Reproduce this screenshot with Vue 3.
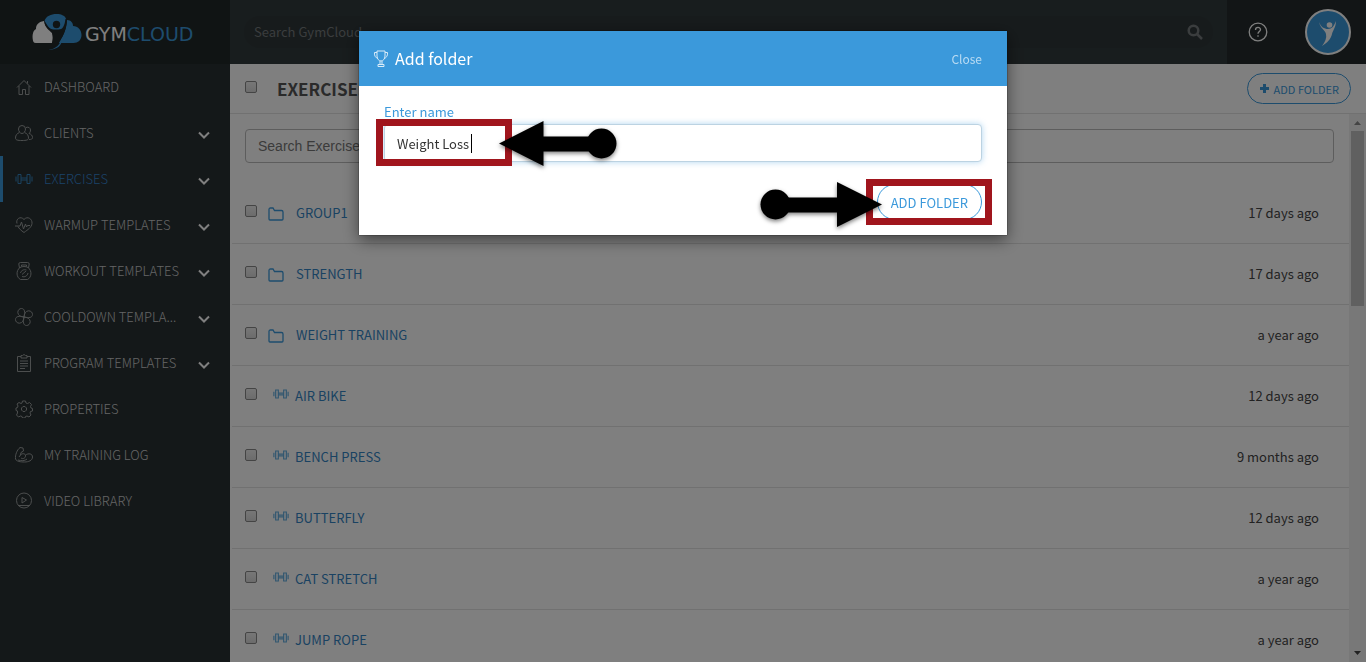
<script setup>
import { ref } from 'vue'

const search = ref('')
const filter = ref('')
const folderName = ref('Weight Loss')

const dumbbell = 'M1 6.5v5M3 4.5h3v9H3zM6 8h6M6 10h6M12 4.5h3v9h-3zM17 6.5v5'

const nav = [
  { label: 'Dashboard', icon: 'M2 9.5 9 2.5l7 7M4 8v8.5h3.5v-5h3v5H14V8M12.5 3v2.5' },
  { label: 'Clients', more: true, icon: 'M7 1.5a3.5 3.5 0 0 1 3.5 3.5c0 2-1.5 4.5-3.5 4.5S3.5 7 3.5 5A3.5 3.5 0 0 1 7 1.5zM4.5 8.5C2 9.5.5 11 .5 14c0 2 2 2.5 6.5 2.5s6.5-.5 6.5-2.5c0-3-1.5-4.5-4-5.5M11 3.5c2.5-1 4.5.5 4.5 2.5 0 1.5-.5 2.5-1.5 3.5 2 .5 3.500 2 3.500 4 0 1.500-1 2-3.500 2' },
  { label: 'Exercises', more: true, active: true, icon: dumbbell },
  { label: 'Warmup Templates', more: true, icon: 'M2 7.5C.5 3 5.5-.5 9 3.5c3.5-4 8.5-.5 8 4-.5 4-4 6-8 9-3-2-5-4-6-6M0 10h5l1.5-4 2 7L10.5 8l1 3 1-1.5H15' },
  { label: 'Workout Templates', more: true, icon: 'M4.5 6 3.8 2Q3.8.5 5.5.5h7q1.7 0 1.7 1.5L13.5 6M6.5 4.5V3h5v1.5M5 5.500C.5 9 1.5 15.500 5.500 17.500h7c4-2 5-8.500.5-12-2-1.300-6-1.300-8 0zM5.500 11c.5-2.500 3.500-4 6-3M13 11c-.5 3-3.500 4.500-6 3.500M7 12.500l4-3.500' },
  { label: 'Cooldown Templa...', more: true, icon: 'M9 9C6 9 3 7.500 2.800 4.500 2.800 2 4.500.5 6.500.5 9.500.5 10.500 4 9 9zM9 9C9 6 10.500 3 13.500 2.800 16 2.800 17.500 4.500 17.500 6.500 17.500 9.500 14 10.500 9 9zM9 9C12 9 15 10.500 15.200 13.500 15.200 16 13.500 17.500 11.500 17.500 8.500 17.500 7.500 14 9 9zM9 9C9 12 7.500 15 4.500 15.200 2 15.200.5 13.500.5 11.500.5 8.500 4 7.500 9 9z' },
  { label: 'Program Templates', more: true, icon: 'M6 2.5H2.5v15h13v-15H12M6 1.5h1.5Q9-.5 10.5 1.5H12v2.5H6zM5 7h8M5 9.5h8M5 12h8M5 14.5h5' },
  { label: 'Properties', icon: 'M7.5 1h3l.5 2 1.5.5 2-1 2 2-1 2 .5 1.5 1.5.5v2.5l-2 .5-.5 1.5 1 2-2 2-2-1-1.5.5-.5 1.5h-2.5l-.5-1.5-1.5-.5-2 1-2-2 1-2L2.5 11 1 10.5V8l1.5-.5L3 6 2 4l2-1.5 2 1 1-.5zM6.5 8 8 6.5h2L11.5 8v2L10 11.5H8L6.5 10z' },
  { label: 'My Training Log', icon: 'M5 1.5 8 2l.5 3L6 6.5 5.5 9c2-2 4-1.5 5 0 3-2 7-1.5 7 2s-4 5-8 5c-4 0-8-.5-9-3C0 9 2 4 5 1.5zM5.5 9 4 11M6 12c2 1.5 5 0 4.5-3M3 14c3 1 7 1 9-1' },
  { label: 'Video Library', icon: 'M9 1a7.5 7.5 0 1 1 0 15A7.5 7.5 0 0 1 9 1zM7 5.5v5.5L11.5 8zM3 13.5h12' },
]

const rows = [
  { name: 'Group1', folder: true, when: '17 days ago' },
  { name: 'Strength', folder: true, when: '17 days ago' },
  { name: 'Weight Training', folder: true, when: 'a year ago' },
  { name: 'Air Bike', when: '12 days ago' },
  { name: 'Bench Press', when: '9 months ago' },
  { name: 'Butterfly', when: '12 days ago' },
  { name: 'Cat Stretch', when: 'a year ago' },
  { name: 'Jump Rope', when: 'a year ago' },
]
</script>

<template>
  <div class="app">
    <aside class="sidebar">
      <a class="logo" href="#">
        <svg class="cloud" width="51" height="38" viewBox="0 0 51 38" aria-hidden="true">
          <path fill="#fff" d="M12 8C6 9 4 12 4 16 0 18 0 25 1.5 29q.5 1 2.5 1h16c1-3 1-7 0-10-3-3-7-5-8-12z" />
          <path fill="#3b99db" d="M12.5 8C14 3 19 1 24.5 1c5 0 9 2 9.5 5-1 8-3 11-7 14h-4c-4-3-7-6-10.5-12z" />
          <path fill="#3b99db" d="M35 7c4 0 6 3 6 6 5 0 8.500 4 8.500 9s-3.500 8-8 8H26c5-6 8-12 9-23z" />
          <path fill="#212829" d="M12.5 8c2 5 5 8 9 8.500h5c4 0 6-3 7-10.500h1.500c0 9-3 15-8 24h-7c1.500-5 1-10-1.500-13-4-2-6-5-6-9z" />
          <circle cx="24.5" cy="11.500" r="3.700" fill="#212829" />
          <path fill="#3b99db" d="M16 37c8-1 12-5 14-12 1 7-5 12-14 12z" />
        </svg>
        <span class="word">GYM<b>CLOUD</b></span>
      </a>
      <nav>
        <a v-for="n in nav" :key="n.label" href="#" class="nav-item" :class="{ active: n.active }">
          <svg class="nav-icon" width="18" height="18" viewBox="0 0 18 18" aria-hidden="true"><path :d="n.icon" /></svg>
          <span class="nav-label">{{ n.label }}</span>
          <svg v-if="n.more" class="chevron" width="12" height="8" viewBox="0 0 12 8" aria-hidden="true"><path d="M1 1.5 6 6.5l5-5" /></svg>
        </a>
      </nav>
    </aside>

    <div class="main">
      <header class="topbar">
        <form class="search" @submit.prevent>
          <input v-model="search" type="text" placeholder="Search GymCloud" aria-label="Search GymCloud" />
          <button type="submit" aria-label="Search">
            <svg width="16" height="16" viewBox="0 0 16 16"><circle cx="6.5" cy="6.5" r="4.8" /><path d="m10 10 5 5" /></svg>
          </button>
        </form>
        <div class="account">
          <a href="#" class="help" aria-label="Help">
            <svg width="20" height="20" viewBox="0 0 20 20"><circle cx="10" cy="10" r="8.8" /><path d="M7.5 8c0-3.5 5-3.3 5-.5 0 2-2.5 2-2.5 4.3M10 13.3v1.5" /></svg>
          </a>
          <a href="#" class="avatar" aria-label="Profile">
            <svg width="42" height="42" viewBox="0 0 42 42"><circle cx="22.5" cy="14" r="2.8" /><path d="M12 11c2 5 5 7 9 7 4 0 6-3 8-8 0 6-3 9-4 13-1 5-5 9-10 12 3-4 5-8 4-12-1-4-6-6-7-12z" /></svg>
          </a>
        </div>
      </header>

      <div class="heading">
        <input type="checkbox" aria-label="Select all" />
        <h1>Exercises</h1>
        <button type="button" class="pill small">
          <svg width="11" height="11" viewBox="0 0 11 11" aria-hidden="true"><path d="M5.5 1v9M1 5.5h9" /></svg>
          Add folder
        </button>
      </div>

      <div class="scroller">
        <section class="content">
          <input v-model="filter" class="filter" type="text" placeholder="Search Exercises" aria-label="Search Exercises" />
          <ul>
            <li v-for="r in rows" :key="r.name">
              <input type="checkbox" :aria-label="'Select ' + r.name" />
              <svg v-if="r.folder" class="folder" width="16" height="14" viewBox="0 0 16 14" aria-hidden="true"><path d="M1 12V2.5Q1 1 2.5 1H5l1.5 2.5h7Q15 3.5 15 5v7q0 1-1 1H2q-1 0-1-1z" /></svg>
              <svg v-else class="bell" width="16" height="16" viewBox="0 0 18 18" aria-hidden="true"><path :d="dumbbell" /></svg>
              <a href="#">{{ r.name }}</a>
              <time>{{ r.when }}</time>
            </li>
          </ul>
        </section>
        <div class="bar" aria-hidden="true">
          <svg width="7" height="4" viewBox="0 0 7 4"><path d="M0 4 3.5 0 7 4z" /></svg>
          <div class="track"><div class="thumb"></div></div>
          <svg class="down" width="7" height="4" viewBox="0 0 7 4"><path d="M0 0h7L3.5 4z" /></svg>
        </div>
      </div>
    </div>
  </div>

  <div class="backdrop">
    <form class="modal" role="dialog" aria-label="Add folder" @submit.prevent>
      <header>
        <svg width="16" height="18" viewBox="0 0 16 18" aria-hidden="true"><path d="M4 1h8v5c0 3-2 5-4 5S4 9 4 6zM4 2.5H1.5C1 6 3 8 5 8.5M12 2.5h2.5C15 6 13 8 11 8.5M7 11v3.5M9 11v3.5M5 14.5h6v2H5z" /></svg>
        <h2>Add folder</h2>
        <button type="button" class="close">Close</button>
      </header>
      <div class="body">
        <label for="folder-name">Enter name</label>
        <div class="field">
          <input id="folder-name" v-model="folderName" type="text" />
          <i class="caret"></i>
        </div>
        <button type="submit" class="pill">Add folder</button>
      </div>
      <svg class="callouts" width="648" height="204" viewBox="0 0 648 204" aria-hidden="true">
        <g class="frame">
          <rect x="20.5" y="91.5" width="129" height="40" />
          <rect x="510.5" y="151.5" width="119" height="39" />
        </g>
        <g class="arrow">
          <path d="M140 112.5 184.5 90v15.500H231v15h-46.500V135z" />
          <circle cx="242.5" cy="112.5" r="15" />
        </g>
        <g class="arrow">
          <path d="M523 173.5 478 151v15.500h-49v15h49V196z" />
          <circle cx="416.5" cy="173.5" r="15" />
        </g>
      </svg>
    </form>
  </div>
</template>

<style>
body {
  margin: 0;
  background: #fff;
}
</style>

<style scoped>
* {
  box-sizing: border-box;
}
.app,
.backdrop {
  font: 13px/20px "Noto Sans CJK KR", "Open Sans", sans-serif;
}
.app {
  display: flex;
  height: 100vh;
  overflow: hidden;
}
a {
  text-decoration: none;
}
input,
button {
  font: inherit;
}
svg {
  flex: none;
  fill: none;
}

.sidebar {
  flex: none;
  width: 230px;
  background: #293032;
}
.logo {
  display: flex;
  align-items: center;
  gap: 2px;
  height: 64px;
  padding-left: 32px;
  background: #212829;
}
.word {
  padding-top: 4px;
  color: #fff;
  font: 19px/20px "DejaVu Sans", sans-serif;
}
.word b {
  color: #3b99db;
  font-weight: 400;
}
.nav-item {
  display: flex;
  align-items: center;
  height: 46px;
  padding: 0 20px 0 12px;
  border-left: 3px solid transparent;
  color: #c8caca;
  font-weight: 300;
  text-transform: uppercase;
}
.nav-icon {
  margin-right: 11px;
  stroke: #989d9d;
}
.nav-label {
  flex: 1;
  white-space: nowrap;
}
.chevron {
  margin-top: 3px;
  stroke: #fff;
  stroke-width: 2;
}
.active {
  border-color: #3b99db;
  color: #3585d0;
}
.active .nav-icon {
  stroke: #3585c0;
}

.main {
  display: flex;
  flex: 1;
  flex-direction: column;
  min-width: 0;
}
.topbar {
  display: flex;
  flex: none;
  height: 64px;
  background: #313a3c;
}
.search {
  display: flex;
  flex: 1;
  align-items: center;
  margin: 16px 14px;
  padding: 0 10px;
  border-radius: 16px;
  background: #2f3739;
}
.search input {
  flex: 1;
  border: 0;
  outline: 0;
  padding: 0;
  background: none;
  color: #ccc;
}
.search input::placeholder {
  color: #757a7c;
  opacity: 1;
}
.search button {
  display: flex;
  border: 0;
  padding: 0;
  background: none;
}
.search svg {
  stroke: #757a7c;
  stroke-width: 2.5;
}
.account {
  display: flex;
  align-items: center;
  justify-content: space-between;
  width: 139px;
  padding: 0 15px 0 21px;
  background: #242b2c;
}
.help,
.avatar {
  display: flex;
}
.help svg {
  stroke: #fff;
  stroke-width: 1.3;
}
.avatar {
  border: 2px solid #fff;
  border-radius: 50%;
  background: #3b99db;
}
.avatar svg {
  fill: #fff;
}

.heading {
  display: flex;
  flex: none;
  align-items: center;
  height: 50px;
  padding: 0 15px;
  border-bottom: 1px solid #e2e2e2;
}
h1 {
  flex: 1;
  margin: 0 0 0 20px;
  color: #555;
  font-size: 17px;
  font-weight: 700;
  text-transform: uppercase;
}
input[type="checkbox"] {
  flex: none;
  appearance: none;
  width: 12px;
  height: 12px;
  margin: 0 0 4px;
  border: 1px solid #888;
  border-radius: 2px;
  background: linear-gradient(#eee, #d8d8d8);
}
.pill {
  display: flex;
  align-items: center;
  justify-content: center;
  height: 36px;
  padding: 2px 13px 0;
  border: 1px solid #3b99db;
  border-radius: 18px;
  background: #fff;
  color: #3b99db;
  text-transform: uppercase;
}
.small {
  gap: 4px;
  height: 31px;
  padding: 0 11px;
  border-radius: 16px;
  font-size: 11px;
}
.small svg {
  stroke: #3b99db;
  stroke-width: 3;
}

.scroller {
  display: flex;
  flex: 1;
  min-height: 0;
}
.content {
  flex: 1;
  padding-top: 15px;
  overflow: hidden;
}
.filter {
  display: block;
  width: calc(100% - 30px);
  height: 34px;
  margin: 0 15px 20px;
  border: 1px solid #bbb;
  border-radius: 4px;
  padding: 0 12px;
  background: #fff;
  color: #555;
  font: 14px/20px "Liberation Sans", sans-serif;
}
.filter::placeholder {
  color: #777;
  opacity: 1;
}
ul {
  margin: 0 0 0 2px;
  padding: 0;
  list-style: none;
}
li {
  display: flex;
  align-items: center;
  height: 61px;
  padding: 0 30px 0 13px;
  border-bottom: 1px solid #e2e2e2;
}
li a {
  flex: 1;
  color: #3585c4;
  text-transform: uppercase;
}
time {
  color: #444;
}
.folder {
  margin: 1px 12px 0 11px;
  stroke: #3b99db;
  stroke-width: 1.3;
}
.bell {
  margin: 0 6px 4px 16px;
  stroke: #62ade0;
  stroke-width: 1.3;
}
.bar {
  display: flex;
  flex: none;
  flex-direction: column;
  align-items: center;
  width: 17px;
  padding: 7px 2px;
  background: #f1f1f1;
}
.bar svg {
  fill: #888;
}
.bar .down {
  fill: #444;
}
.track {
  flex: 1;
  width: 13px;
  margin: 6px 0;
}
.thumb {
  height: 34%;
  background: #c1c1c1;
}

.backdrop {
  position: fixed;
  inset: 0;
  padding-top: 31px;
  background: rgba(0, 0, 0, 0.5);
}
.modal {
  position: relative;
  width: 648px;
  max-width: 100%;
  margin: 0 auto;
  background: #fff;
  box-shadow: 0 5px 15px rgba(0, 0, 0, 0.5), 0 0 1px #000;
}
.modal header {
  display: flex;
  align-items: center;
  height: 55px;
  padding: 0 25px 0 14px;
  background: #3b99db;
}
.modal header svg {
  stroke: #d8ebf8;
}
h2 {
  flex: 1;
  margin: 0 0 2px 6px;
  color: #fff;
  font-size: 16px;
  font-weight: 400;
}
.close {
  border: 0;
  padding: 0;
  background: none;
  color: #b9dbf3;
  font-size: 12px;
}
.body {
  display: flex;
  flex-direction: column;
  padding: 16px 25px 15px;
}
label {
  color: #3b99db;
}
.field {
  position: relative;
  margin: 2px 0 22px;
}
.field input {
  display: block;
  width: 100%;
  height: 38px;
  border: 1px solid #bcd3e2;
  border-radius: 4px;
  outline: 0;
  padding: 0 12px;
  background: #fff;
  box-shadow: 0 0 6px rgba(59, 153, 219, 0.4);
  color: #333;
}
.caret {
  position: absolute;
  top: 10px;
  left: 87px;
  width: 1px;
  height: 19px;
  background: #000;
}
.body .pill {
  align-self: flex-end;
}
.callouts {
  position: absolute;
  top: 0;
  left: 0;
}
.frame {
  stroke: #a0151d;
  stroke-width: 7;
}
.arrow {
  fill: #000;
  filter: drop-shadow(0 2px 2px rgba(0, 0, 0, 0.5));
}
</style>
